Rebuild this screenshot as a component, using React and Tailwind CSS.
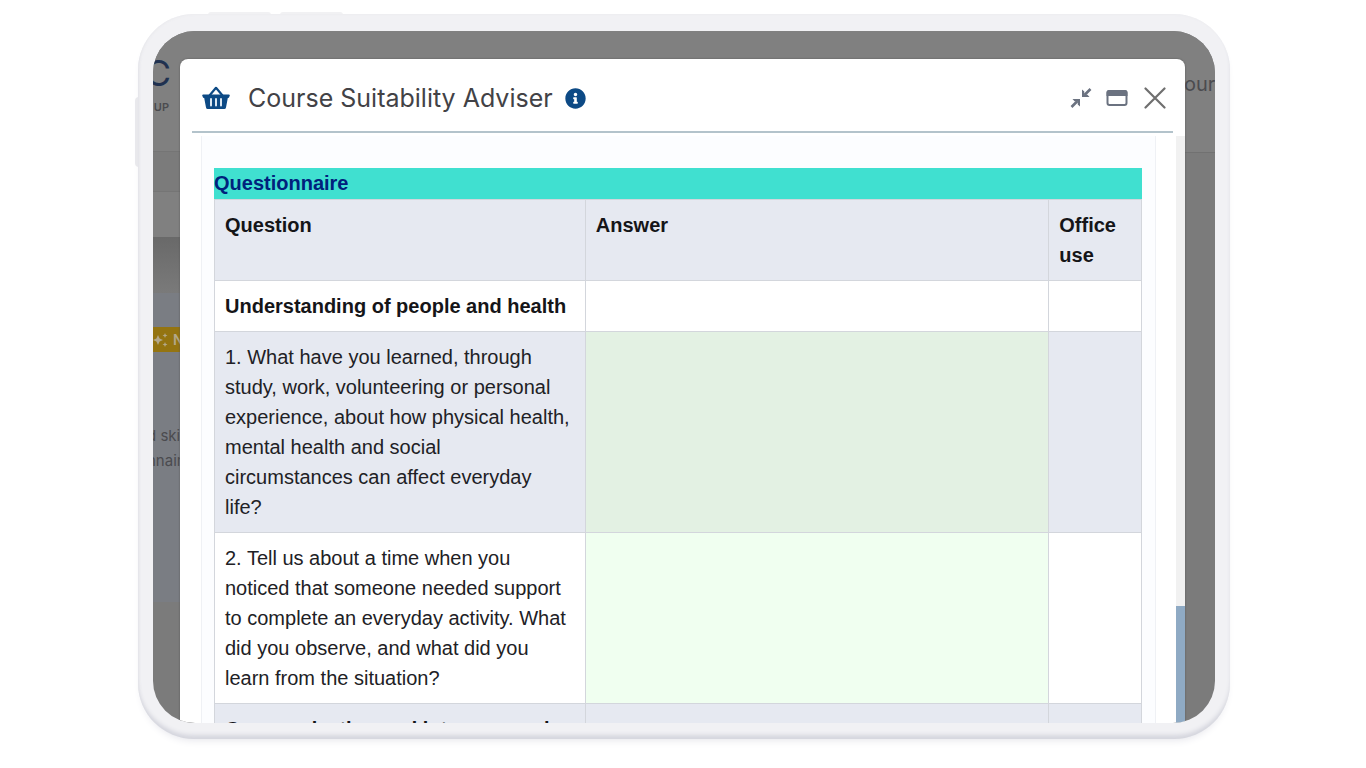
import React from 'react';
import { FaInfoCircle } from 'react-icons/fa';

const rows = [
  { id: 'people', question: 'Understanding of people and health', heading: true },
  {
    id: 'q1',
    question:
      '1. What have you learned, through study, work, volunteering or personal experience, about how physical health, mental health and social circumstances can affect everyday life?',
  },
  {
    id: 'q2',
    question:
      '2. Tell us about a time when you noticed that someone needed support to complete an everyday activity. What did you observe, and what did you learn from the situation?',
  },
  { id: 'communication', question: 'Communication and interpersonal skills', heading: true },
];

const BasketIcon = () => (
  <svg viewBox="0 0 28 24" className="w-7 h-6" aria-hidden="true">
    <path d="M7.500 9.500 14 1.800l6.500 7.700" fill="none" stroke="#0d4a85" strokeWidth="2.200" strokeLinejoin="round" />
    <path
      d="M1 8.500h26a.8.8 0 0 1 .7 1.200L27 11.600a1 1 0 0 1-.8.500h-.4L24 21.500a1.800 1.800 0 0 1-1.800 1.500H5.800A1.800 1.800 0 0 1 4 21.500L2.200 12.100h-.4a1 1 0 0 1-.8-.500L.3 9.700A.8.8 0 0 1 1 8.500z"
      fill="#0d4a85"
    />
    <path d="M9 13v6.500M14 13v6.500M19 13v6.500" stroke="#dbe7f2" strokeWidth="2" strokeLinecap="round" />
  </svg>
);

const MinimizeIcon = () => (
  <svg viewBox="0 0 22 22" className="w-[22px] h-[22px]" fill="none" stroke="#6b7280" strokeWidth="2.600" aria-hidden="true">
    <path d="M20.500 2l-6 6M1.500 20l6-6" />
    <path d="M12 2.500v7.500h7.500l-2-2.200h-3.200v-3.300zM10 19.500V12H2.500l2 2.200h3.200v3.300z" fill="#6b7280" stroke="none" />
  </svg>
);

const WindowIcon = () => (
  <svg viewBox="0 0 22 18" className="w-[22px] h-[18px]" aria-hidden="true">
    <rect x="1.500" y="2" width="19" height="14" rx="2" fill="none" stroke="#6b7280" strokeWidth="2" />
    <path d="M.5 3.500a2.500 2.500 0 0 1 2.500-2.500h16a2.500 2.500 0 0 1 2.500 2.500v3.500H.5z" fill="#6b7280" />
  </svg>
);

const CloseIcon = () => (
  <svg viewBox="0 0 22 22" className="w-[22px] h-[22px]" aria-hidden="true">
    <path d="M1.500 1.500l19 19M20.500 1.500l-19 19" stroke="#6f6f6f" strokeWidth="2.200" strokeLinecap="round" />
  </svg>
);

const SparklesIcon = () => (
  <svg viewBox="0 0 16 16" className="w-4 h-4 shrink-0" fill="#b3a88a" aria-hidden="true">
    <path d="M5 3l1.600 3.400L10 8 6.600 9.600 5 13 3.400 9.600 0 8l3.400-1.600z" />
    <path d="M12 1l.7 1.800 1.800.7-1.800.7L12 6l-.7-1.800-1.800-.7 1.800-.7zM12 10l.7 1.800 1.800.7-1.800.7L12 15l-.7-1.800-1.800-.7 1.800-.7z" />
  </svg>
);

// Dimmed page that stays visible around the dialog
const Backdrop = () => (
  <div
    className="absolute inset-0 flex justify-between bg-[#7b7b7b] whitespace-nowrap text-[#4b4b4f]"
    aria-hidden="true"
  >
    <div className="w-full overflow-hidden">
      <div className="h-[121px] pt-[22px] bg-[#808080] border-b border-[#757575]">
        <div className="w-[18px] flex justify-end text-[36px] leading-10 text-[#1f3150]">C</div>
        <div className="w-4 mt-2 flex justify-end text-[11px] leading-3 font-semibold">UP</div>
      </div>
      <div className="h-10 bg-[#7b7b7b] border-b border-[#757575]" />
      <div className="h-[45px] bg-[#808080]" />
      <div className="h-14 bg-linear-to-b from-[#696969] to-[#7a7a7a]" />
      <div className="h-[309px] pt-[34px] bg-[#7a7d83]">
        <div className="h-[25px] flex items-center gap-1 bg-[#947411] text-[#b3a88a] text-sm font-semibold">
          <SparklesIcon />
          NEW
        </div>
        <div className="mt-[71px] -ml-[6px] text-[15px] leading-[25px]">
          <div>d skills</div>
          <div>nnaire</div>
        </div>
      </div>
    </div>
    <div className="w-[31px] shrink-0 overflow-hidden">
      <div className="h-[122px] pt-[39px] bg-[#808080] border-b border-[#717171] text-xl">our</div>
    </div>
  </div>
);

const DialogHeader = () => (
  <header className="mx-3 h-[74px] shrink-0 pt-[6px] flex items-center justify-between border-b-2 border-[#b3c3cb]">
    <div className="flex items-center pl-[10px]">
      <BasketIcon />
      <h1 className="ml-[18px] text-[25px] leading-8 text-[#424246]">Course Suitability Adviser</h1>
      <button type="button" aria-label="Information" className="ml-3 text-[#0d4a85]">
        <FaInfoCircle className="w-[21px] h-[21px]" />
      </button>
    </div>
    <div className="flex items-center gap-[14px] pr-[7px]">
      <button type="button" aria-label="Minimise">
        <MinimizeIcon />
      </button>
      <button type="button" aria-label="Maximise">
        <WindowIcon />
      </button>
      <button type="button" aria-label="Close" className="ml-[2px]">
        <CloseIcon />
      </button>
    </div>
  </header>
);

const Questionnaire = () => (
  <table className="w-full table-fixed border-collapse text-xl leading-[30px] text-[#212125]">
    <caption className="pb-px bg-[#40e0d0] text-left font-bold text-[#00217c]">Questionnaire</caption>
    <colgroup>
      <col className="w-2/5" />
      <col className="w-1/2" />
      <col className="w-1/10" />
    </colgroup>
    <thead>
      <tr className="bg-[#e6e9f1] text-left align-top text-[#151518]">
        <th className="p-[10px] border border-[#d3d6dc]">Question</th>
        <th className="p-[10px] border border-[#d3d6dc]">Answer</th>
        <th className="p-[10px] border border-[#d3d6dc]">Office use</th>
      </tr>
    </thead>
    <tbody>
      {rows.map((row) => (
        <tr key={row.id} className="bg-white even:bg-[#e6e9f1] align-top group">
          {row.heading ? (
            <th scope="row" className="p-[10px] border border-[#d3d6dc] text-left text-[#151518]">
              {row.question}
            </th>
          ) : (
            <td className="py-[10px] pl-[10px] pr-3 border border-[#d3d6dc]">{row.question}</td>
          )}
          {row.heading ? (
            <td className="border border-[#d3d6dc]" />
          ) : (
            <td className="border border-[#d3d6dc] bg-[#f0fff0] group-even:bg-[#e3f1e3]" />
          )}
          <td className="border border-[#d3d6dc]" />
        </tr>
      ))}
    </tbody>
  </table>
);

const App = () => {
  return (
    <div className="h-screen overflow-hidden bg-white pl-[138px] pr-[136px] pt-[14px] pb-[29px] font-['Inter',sans-serif]">
      <div className="relative h-full">
        <div className="absolute -top-[2px] left-[70px] w-[63px] h-[3px] rounded-t bg-[#f1f1f3]" />
        <div className="absolute -top-[2px] left-[142px] w-[63px] h-[3px] rounded-t bg-[#f1f1f3]" />
        <div className="absolute -left-[3px] top-[83px] w-1 h-[70px] rounded-l bg-[#e9e9ed]" />

        <div className="relative h-full rounded-[56px] bg-[#f1f1f4] px-[15px] pt-[17px] pb-4 shadow-[inset_0_-5px_4px_-1px_#d5d6de,inset_1px_0_3px_#e8e8ec,0_5px_8px_-4px_#e4e4ea]">
          <div className="relative h-full rounded-[42px] overflow-hidden">
            <Backdrop />
            <section
              role="dialog"
              aria-label="Course Suitability Adviser"
              className="relative h-full pt-7 pl-[27px] pr-[30px]"
            >
              <div className="h-full flex flex-col rounded-t-lg bg-white overflow-hidden shadow-[0_0_2px_#555]">
                <DialogHeader />
                <div className="flex-1 min-h-0 mt-[3px] flex">
                  <div className="flex-1 ml-[21px] pt-8 pl-3 pr-[13px] border-x border-[#eff1f5] bg-[#fcfdff] overflow-hidden font-['Liberation_Sans',Arial,sans-serif]">
                    <Questionnaire />
                  </div>
                  <div className="ml-5 w-[9px] bg-[#f1f1f1] flex flex-col justify-end">
                    <div className="h-1/5 bg-[#8faac4]" />
                  </div>
                </div>
              </div>
            </section>
          </div>
        </div>
      </div>
    </div>
  );
};

export default App;
